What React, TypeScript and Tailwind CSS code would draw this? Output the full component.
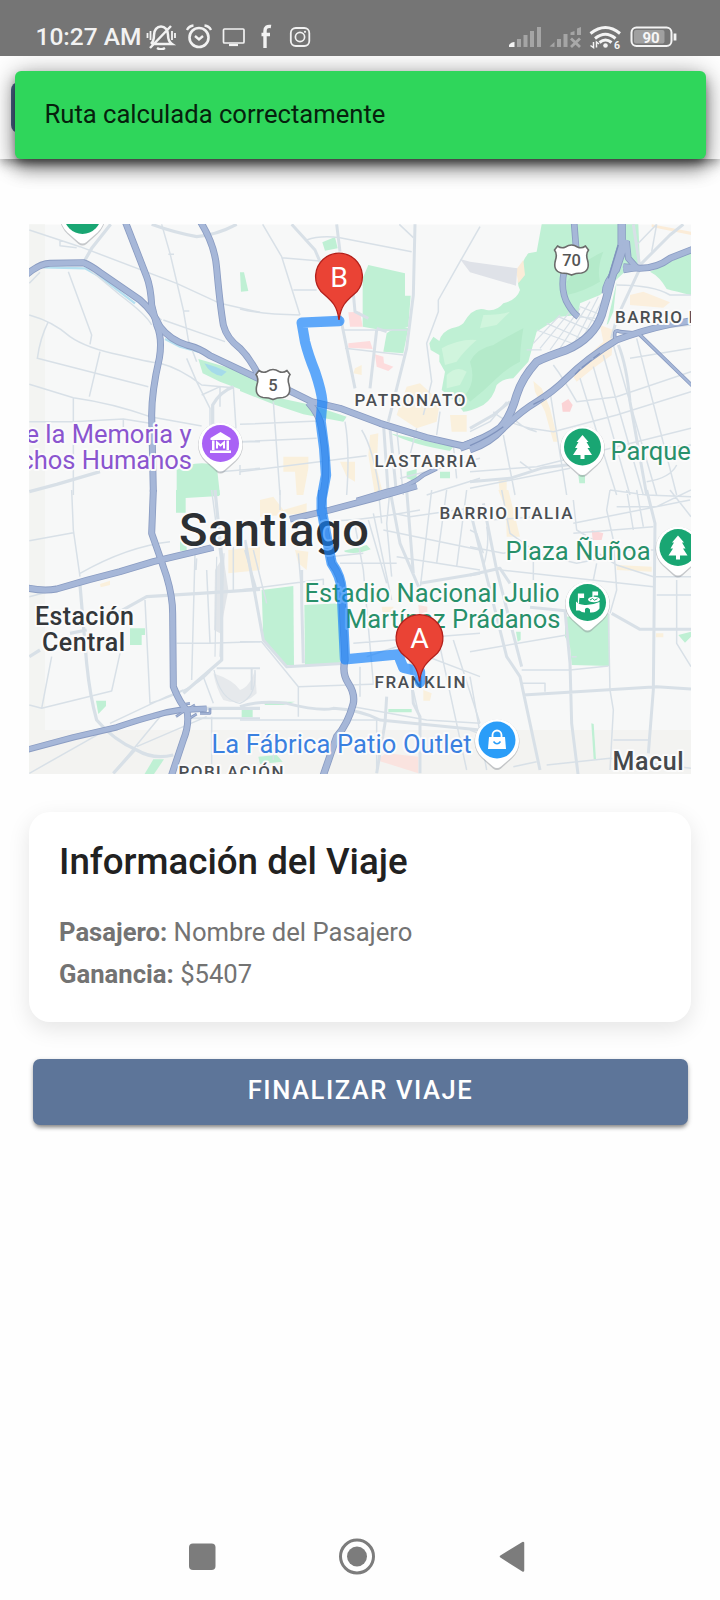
import type { ReactNode } from "react";

type Tile = { x: number; y: number };
const NW: Tile = { x: 20, y: 215 };
const N: Tile = { x: 240, y: 215 };
const NE: Tile = { x: 470, y: 215 };
const SW: Tile = { x: 20, y: 490 };
const S: Tile = { x: 240, y: 490 };
const SE: Tile = { x: 470, y: 490 };

function Sector({ at, children }: { at: Tile; children: ReactNode }) {
  return <g transform={`translate(${at.x} ${at.y}) scale(0.33333)`}>{children}</g>;
}

const areas: { at: Tile; d: string; fill: string }[] = [
  { at: NW, d: "M28 28H75V840H28Z", fill: "#f3f4f2" },
  { at: SW, d: "M28 0H75V860H28Z", fill: "#f3f4f2" },
  { at: SW, d: "M28 720H2100V860H28Z", fill: "#f3f3f1" },
  // parks
  { at: NW, d: "M660 172L672 172L685 228L663 230Z", fill: "#bff0d4" },
  { at: NW, d: "M535 432L640 462L720 500V545L600 500L548 475Z", fill: "#bff0d4" },
  { at: N, d: "M0 488L100 545L215 570L320 605L310 620L190 598L100 568L0 528Z", fill: "#bff0d4" },
  { at: NW, d: "M470 765Q520 735 590 750L600 840H470Z", fill: "#bff0d4" },
  { at: SW, d: "M468 0H598V18L497 24V68H468Z", fill: "#bff0d4" },
  { at: SW, d: "M480 150H500V182H480Z", fill: "#bff0d4" },
  { at: N, d: "M247 82L285 66L293 100L255 107Z", fill: "#bff0d4" },
  { at: N, d: "M385 150L495 175V242H512L505 335L440 348L368 335V190Z", fill: "#bff0d4" },
  { at: N, d: "M440 355Q480 325 505 340L490 415L430 410Z", fill: "#bff0d4" },
  {
    at: NE,
    d: "M215 28H505L510 150L470 165L390 240L330 265L325 300L270 305L200 350L175 440L130 490Q100 490 80 510Q70 550 40 570Q0 590 -20 590Q-40 560 -85 525L-75 470L-92 440V420L-118 405L-122 385L-110 365L-92 378Q-85 350 -55 340Q-30 335 -20 325Q10 270 50 285Q80 290 100 265Q140 255 150 225Q135 195 155 175Q150 145 175 115L200 110Z",
    fill: "#bff0d4",
  },
  { at: NE, d: "M540 170L663 110V240Q620 230 590 222Q570 185 540 170Z", fill: "#bff0d4" },
  { at: NE, d: "M410 330L440 200L430 290L415 325Z", fill: "#bff0d4" },
  { at: NE, d: "M325 780H345V805H328Z", fill: "#bff0d4" },
  { at: N, d: "M450 655L640 695L630 708Q520 690 450 655Z", fill: "#bff0d4" },
  { at: N, d: "M500 770L530 762V800L500 790ZM600 770H630V790H600Z", fill: "#bff0d4" },
  { at: SW, d: "M330 415H375V435H365V465H330Z", fill: "#bff0d4" },
  { at: SW, d: "M228 632H258V648L235 672Z", fill: "#bff0d4" },
  { at: SW, d: "M400 808H432L400 855H372Z", fill: "#bff0d4" },
  { at: SW, d: "M665 658H698V682H665Z", fill: "#bff0d4" },
  { at: S, d: "M65 300L160 288L162 525L138 525L70 450Z", fill: "#bff0d4" },
  { at: S, d: "M193 345L300 340V522L195 525Z", fill: "#bff0d4" },
  { at: S, d: "M312 182L380 165L392 178Q350 195 315 186Z", fill: "#bff0d4" },
  { at: S, d: "M70 635H165L130 645H75ZM445 657H515V667H445ZM55 800L110 795L128 815L60 822Z", fill: "#bff0d4" },
  { at: SE, d: "M285 380L418 372V528L305 525L300 470L285 440Z", fill: "#bff0d4" },
  { at: SE, d: "M625 435L663 425V440L645 458ZM138 425H152V450L143 455Z", fill: "#bff0d4" },
  { at: SE, d: "M364 700L371 702L378 808H371Z", fill: "#bff0d4" },
  // hill relief
  { at: NE, d: "M0 440Q20 400 70 390Q120 360 160 340Q150 400 150 440Q110 460 80 490Q40 530 0 560L-15 540Q20 500 0 440ZM290 200Q330 140 400 110Q380 160 390 200Q340 230 290 240Z", fill: "#b4eaca" },
  { at: NE, d: "M-85 400Q-30 370 20 375Q-20 410 -40 440L-75 450ZM-70 480Q-40 450 -10 470L-30 510L-70 520ZM40 300Q90 300 120 290L80 330L30 340Z", fill: "#d0f5dd" },
  // shopping corridors
  { at: N, d: "M500 515L540 505L600 560L590 620L530 640L470 600L480 570Z", fill: "#faf0dc" },
  { at: N, d: "M345 460L365 450V480L340 475ZM390 660L415 655L410 760L430 840H405L385 720ZM130 725H205V760L190 840H170L165 770H130ZM300 740H345V800L320 785Z", fill: "#faf0dc" },
  { at: N, d: "M630 600H680V650H635Z", fill: "#faf0dc" },
  { at: NE, d: "M480 240L520 230L600 262L580 278L480 270ZM390 330L430 345L425 420L370 460L320 500L300 470L400 380Z", fill: "#fbefdd" },
  { at: NE, d: "M190 498L215 520L240 580L265 680H250L225 590L195 530ZM85 790H110V840H90Z", fill: "#faf0dc" },
  { at: NE, d: "M138 165L160 135L165 180L145 205ZM545 28L663 50V60L545 36Z", fill: "#fbecd8" },
  { at: SW, d: "M240 282L270 272V285L242 292ZM625 180L720 170V240L625 250Z", fill: "#faf0dc" },
  { at: S, d: "M60 30L100 20L130 60L200 40V70L60 80ZM0 180L60 200L50 235L0 225ZM165 180L205 185L200 240L175 220Z", fill: "#faf0dc" },
  { at: S, d: "M425 350H460V385H430ZM550 600L575 610L570 632H550Z", fill: "#faf0dc" },
  { at: SE, d: "M85 0H115L130 60L150 140H110L108 60ZM440 225L545 230V245L440 240ZM558 430H580V442H558Z", fill: "#faf0dc" },
  // hospitals
  { at: N, d: "M325 292L360 290L368 335H330ZM325 385L390 378L398 402L325 398ZM405 418L430 425L432 445L460 455L445 468L410 455Z", fill: "#fddcdd" },
  { at: NE, d: "M275 565L295 552L308 570L300 590H278Z", fill: "#fbd3d5" },
  { at: S, d: "M535 345L562 350V400H540ZM415 805L440 790L535 800V850L415 812Z", fill: "#fae3df" },
  { at: SE, d: "M365 120L400 130L395 150H368Z", fill: "#fbd8da" },
  // airfield and depot
  { at: NE, d: "M-30 132L0 140L142 160L138 212L0 172Z", fill: "#dfe2e8" },
  { at: NW, d: "M553 445Q590 455 620 470L605 483Q570 478 553 445Z", fill: "#a5dbea" },
  { at: SW, d: "M585 240L610 200L625 300L600 430L582 420Z", fill: "#e1e5e9" },
  { at: SW, d: "M580 550Q640 570 660 600Q690 590 705 540L710 610Q670 650 610 630Q590 600 580 550Z", fill: "#e6e9ec" },
];

const streets: { at: Tile; d: string; w: number }[] = [
  { at: NW, w: 6, d: "M28 45L180 95L470 205L600 265L720 292M120 75V92L170 98M425 28L450 115L490 285L505 375L530 440M445 118H462M490 288H508M430 315L615 380M28 300Q100 320 150 365Q200 400 300 420Q380 440 420 445Q480 460 545 510L640 518M145 170L215 360L210 388M85 320Q60 370 52 430L385 515M240 410L208 545M28 508L160 548Q280 565 390 605L545 633M28 620H160L310 612L390 625M160 550V840M310 612V640M28 205L60 172M500 430L530 500L570 580V640M640 515L648 640M545 540L600 515V575M650 680H720M600 770L720 760M660 750V780" },
  { at: NW, w: 13, d: "M272 28L215 100L195 135M28 830L110 808L240 770M640 515Q600 530 578 570V640" },
  { at: NW, w: 13, d: "M395 28Q460 52 530 65Q590 60 650 28" },
  { at: NW, w: 6, d: "M205 160L300 240Q380 300 395 330M405 300L425 315" },
  { at: N, w: 6, d: "M68 28L125 125L180 300M200 75Q240 60 300 68L515 110M125 128L240 138M160 225H230M0 282Q60 298 180 300M478 28L520 68M720 35L660 140L595 255V290L560 385L575 500L550 600M315 400L490 420M0 628L235 618M0 680L230 670M0 770L380 722M100 560L120 840M315 620Q330 700 320 840M365 645Q400 700 420 840M470 640L490 840M530 640L500 760M600 590L590 660M640 690L650 790M310 345H500M480 790L720 730M560 840L720 790" },
  { at: N, w: 12, d: "M155 28L225 105L240 140M290 28L300 110M525 28L520 240L500 400L470 520L445 620M335 180L345 290L385 310M300 300L345 520M410 345L390 520M440 350L410 340M430 620L445 840M450 640L470 840" },
  { at: NE, w: 6, d: "M500 90L560 28M560 28L545 110M440 210Q550 210 600 240H663M250 450Q280 490 320 560L440 545L663 470M180 640L250 650L440 600L663 530M110 590Q150 640 200 650M240 530L290 840M330 490L440 840M370 455L480 840M400 420L520 840M430 390L560 840M500 370L620 840M530 345L663 330M480 430L663 400M100 660L135 840M70 590Q100 620 180 640M0 650L60 620L110 560M0 770L200 755M200 755L663 640M0 820L300 760M150 740L190 770M560 700L663 690M530 800Q600 790 620 750" },
  { at: NE, w: 12, d: "M445 390Q470 450 480 560L530 840M490 28L510 160L440 310L425 370M500 160L600 60L640 28M0 800L120 790L220 758L370 740M0 640L70 600L120 560" },
  { at: NE, w: 5, d: "M200 345L320 390M230 325L345 375M265 305L370 350M300 290L390 325M330 275L395 300M190 385L270 300M210 400L300 290M240 405L330 280M270 400L360 260M310 390L385 245M340 365L400 250M170 405H215M320 305L380 310" },
  { at: SW, w: 6, d: "M28 152L160 128M155 0L160 120L180 260M180 250Q320 170 450 155M95 500L65 655L28 645M65 655L275 603L300 490M375 330L390 640Q520 600 570 545M470 460H570L720 455M525 190L515 570M28 320L180 280M560 240L570 460M575 0L605 230M640 170V300M700 180L740 340M580 640L550 560M575 680V840M28 850L240 730M350 770L560 680M530 205L528 240M490 600L440 620L270 700M280 850L420 680" },
  { at: SW, w: 13, d: "M180 285Q190 400 200 520Q210 620 230 690Q280 750 350 780Q400 810 460 795M290 370L380 320L540 310L620 305L720 298M585 0L605 200V510L490 610M28 500L60 480M150 430L200 420M560 655H720M345 778L280 850" },
  { at: SW, w: 8, d: "M590 535H720M695 535V600M500 685H720M675 180L710 300" },
  { at: SW, w: 5, d: "M582 540Q600 630 660 640Q710 620 705 540M590 200L585 500M612 190L600 500" },
  { at: S, w: 6, d: "M0 300L250 268V285M0 455H65L175 590L480 580M175 590V680M120 0V60M175 190L185 310M245 90Q320 100 540 60M300 220H470M270 200L370 190M345 105L370 240L400 580M385 90L440 280M400 70L455 330M415 0L425 100M450 0L440 100L455 260M460 70L510 80L720 50M430 120L720 180M470 200L720 240M575 0L540 300M620 0L590 220M680 0L650 230M340 460L720 430M0 690H420M410 690V840M380 500L470 470M100 760V810M600 470L680 840M640 450L720 700M510 480L720 560M360 530V620M340 650L560 690L720 700M515 580L540 690" },
  { at: S, w: 12, d: "M15 150L70 450L140 530L320 520M185 240V330L190 520M0 650Q60 630 140 640Q240 665 280 655Q360 660 420 690L720 720M450 0L480 160L540 300M500 0L520 250M540 280L720 250M440 620L435 700L410 850M510 480L520 640L540 680V850" },
  { at: SE, w: 6, d: "M420 0L410 60L430 150L440 300L420 370M310 100L660 30M310 130L550 110M470 0L490 120M500 0L520 110M310 30L320 120L370 150M440 50H560L663 0M600 0L663 80M440 180H560L590 150M0 170L100 190M40 190L20 130L0 120M60 90L200 80M95 0L120 130L190 180V270M50 110Q60 160 40 230M90 240L550 290M370 180L440 225L550 260H663M380 220L370 270M560 315H663M620 270V460L663 530M420 0L530 15L663 20M0 485L290 435M155 540H300L415 528M150 580H225V605M415 370L420 600L430 660L420 840M0 560L50 840M430 750H540M0 720L50 740M230 825L420 805L663 835M130 830L200 815M320 500H305M100 190L150 180L320 220L420 200" },
  { at: SE, w: 12, d: "M0 60L30 180L110 500L150 560L210 840M0 255L90 235L120 280M180 352L285 362L300 520L305 700L325 860M425 370L510 418H663M530 0L555 100L550 600L535 790M160 615L320 605L560 590L663 597M40 40L80 240L155 530" },
];

const waterways: { at: Tile; d: string }[] = [
  { at: NW, d: "M70 157L195 160L240 185L345 265M435 372L480 395L535 410" },
];

const highways: { at: Tile; d: string; w: number }[] = [
  { at: NW, w: 21, d: "M18 180Q60 145 90 145L190 143Q210 150 240 172L360 255Q400 290 420 335Q450 375 500 390Q540 400 570 422L640 455L720 493" },
  { at: NW, w: 21, d: "M315 18L380 185Q392 215 395 270L410 330Q428 370 418 430Q395 530 395 600L400 830" },
  { at: NW, w: 21, d: "M540 18Q585 90 590 160Q600 270 610 330Q620 370 660 400Q690 430 715 480" },
  { at: N, w: 21, d: "M40 480L150 528L215 560L300 580L420 625L560 668L670 693L720 672" },
  { at: N, w: 22, d: "M205 562Q240 600 245 640Q262 740 255 800L245 870" },
  { at: N, w: 14, d: "M350 855L440 828Q510 815 550 780L590 760" },
  { at: NE, w: 25, d: "M-30 698Q50 670 90 640Q120 610 140 540Q155 490 200 440Q230 425 290 405Q370 370 395 300Q410 250 425 190L455 90V18" },
  { at: NE, w: 20, d: "M312 18L318 95L282 170Q270 230 295 270Q310 295 325 305" },
  { at: NE, w: 21, d: "M0 705Q60 685 100 640Q150 590 200 560Q250 530 290 490Q350 430 440 375Q520 345 600 328L680 315" },
  { at: NE, w: 21, d: "M460 155L510 160Q560 160 600 130L680 98" },
  { at: NE, w: 20, d: "M405 235Q405 200 440 165L470 75M470 80L475 130L500 158L460 165" },
  { at: NE, w: 11, d: "M435 370Q430 340 450 350L505 355L680 525" },
  { at: SW, w: 21, d: "M18 293Q70 305 110 297Q200 270 300 245L400 215L580 172" },
  { at: SW, w: 21, d: "M400 0L395 130Q420 200 440 260Q458 320 458 370L460 590Q480 640 500 660Q510 700 490 750L450 870" },
  { at: SW, w: 19, d: "M18 780L160 742L290 712Q360 688 400 678Q440 665 480 660L560 656" },
  { at: SW, w: 8, d: "M468 680L490 665L525 645M500 690L530 672M540 670H570V655M480 645L510 640" },
  { at: S, w: 20, d: "M150 88L270 60L420 20L530 -12" },
  { at: S, w: 22, d: "M245 0V60Q265 170 275 220Q305 260 305 300L315 510Q305 550 325 580Q345 610 340 640Q325 700 290 740L245 870" },
];

type LabelProps = { x: number; y: number; w?: number; size: number; color: string; weight?: number; end?: boolean; children: string };
function Label({ x, y, w, size, color, weight = 400, end, children }: LabelProps) {
  return (
    <text
      x={x + 0.5}
      y={y + 0.3}
      fontSize={size}
      fontWeight={weight}
      fill={color}
      textLength={w}
      textAnchor={end ? "end" : "start"}
      stroke="#fbfbfb"
      strokeWidth={4}
      strokeLinejoin="round"
      paintOrder="stroke"
    >
      {children}
    </text>
  );
}

function Poi({ x, y, color, children }: { x: number; y: number; color: string; children: ReactNode }) {
  return (
    <g transform={`translate(${x} ${y})`}>
      <path d="M-15 17A22.5 22.5 0 1 1 15 17L4 27Q0 30 -4 27Z" fill="#8a8f94" opacity=".45" transform="translate(0 1.5)" />
      <path d="M-15 17A22 22 0 1 1 15 17L4 26.500Q0 29.500 -4 26.500Z" fill="#fff" />
      <circle r="18.500" fill={color} />
      {children}
    </g>
  );
}

const tree = <path d="M0-12L6-5H4L7.500 1H5L9.500 8H2V12H-2V8H-9.500L-5 1H-7.500L-4-5H-6Z" fill="#fff" />;

function Marker({ x, y, letter }: { x: number; y: number; letter: string }) {
  return (
    <g transform={`translate(${x} ${y})`}>
      <path
        d="M0 0C-2-17-10-21-18-28.500A23.400 23.400 0 1 1 18-28.500C10-21 2-17 0 0Z"
        fill="#ea4335"
        stroke="#b31f1a"
        strokeWidth="1.300"
      />
      <text y="-33.500" fontSize="28.500" fill="#fff" textAnchor="middle">
        {letter}
      </text>
    </g>
  );
}

function Shield({ x, y, children }: { x: number; y: number; children: string }) {
  return (
    <g transform={`translate(${x} ${y})`}>
      <path
        d="M-14-14Q-10-11-6-13Q-3-15 0-15Q3-15 6-13Q10-11 14-14L17-10Q14-6 16 0Q19 11 10 13Q4 13 0 15Q-4 13-10 13Q-19 11-16 0Q-14-6-17-10Z"
        fill="#fff"
        stroke="#6b6b6b"
        strokeWidth="1.600"
      />
      <text y="6" fontSize="16.500" fontWeight="500" fill="#555" textAnchor="middle">
        {children}
      </text>
    </g>
  );
}

function RouteMap() {
  const dark = "#4a4e52";
  const green = "#28906a";
  return (
    <svg viewBox="29 224 662 550" className="block h-[550px] w-full font-['Roboto',sans-serif]">
      <rect x="29" y="224.500" width="662" height="549.500" fill="#f7f8f8" />
      {areas.map((a, i) => (
        <Sector key={i} at={a.at}>
          <path d={a.d} fill={a.fill} />
        </Sector>
      ))}
      {waterways.map((a, i) => (
        <Sector key={i} at={a.at}>
          <path d={a.d} fill="none" stroke="#b5e0f0" strokeWidth="7" />
        </Sector>
      ))}
      {streets.map((a, i) => (
        <Sector key={i} at={a.at}>
          <path d={a.d} fill="none" stroke="#d8e0e7" strokeWidth={a.w * 0.75} strokeLinejoin="round" />
        </Sector>
      ))}
      {highways.map((a, i) => (
        <Sector key={i} at={a.at}>
          <path d={a.d} fill="none" stroke="#8a9cc2" strokeWidth={a.w} strokeLinejoin="round" />
        </Sector>
      ))}
      {highways.map((a, i) => (
        <Sector key={i} at={a.at}>
          <path d={a.d} fill="none" stroke="#a6b7d8" strokeWidth={a.w - 5} strokeLinejoin="round" />
        </Sector>
      ))}
      <Sector at={NE}>
        <path
          d="M0 692Q60 665 100 635M315 478L330 462M335 458L365 435M370 430L390 415M190 568L222 552M415 190L445 90"
          fill="none"
          stroke="#7f93bd"
          strokeWidth="4"
        />
      </Sector>
      <Shield x={273} y={384.5}>5</Shield>
      <Shield x={571.5} y={260}>70</Shield>

      <Poi x={82.5} y={215.5} color="#19a673">{null}</Poi>
      <Poi x={220.5} y={443.5} color="#a962f5">
        <path d="M0-11.500L10-5.500V-3.500H-10V-5.500ZM-8.500-3H-6V6.500H-8.500ZM6-3H8.500V6.500H6ZM-10.500 7H10.500V9.500H-10.500Z" fill="#fff" />
        <path d="M-3.500 5V-1L0 2L3.500-1V5" fill="none" stroke="#fff" strokeWidth="2" />
      </Poi>
      <Poi x={582.5} y={447} color="#19a673">{tree}</Poi>
      <Poi x={678} y={547.5} color="#19a673">{tree}</Poi>
      <Poi x={587.5} y={602.5} color="#19a673">
        <path d="M-11.500-1Q-9 2-3 2.500Q4 3 12-.5V6Q9 10 4 10H2.500V7Q0 4-2.500 6.500V10Q-6 10-8 8H-11.500Z" fill="#fff" />
        <ellipse cx="6.500" cy="-3" rx="6" ry="2.800" fill="#fff" />
        <path d="M-9 1V-8.500H-4V-5H-8M5.500-5V-10.500H10V-7.500H6" stroke="#fff" strokeWidth="1.200" fill="#fff" />
        <path d="M2.500-2.500L5-4L7-2.300L10-3.800" stroke="#19a673" fill="none" />
      </Poi>
      <Poi x={497} y={740} color="#2a9df8">
        <path d="M-8-3H8L9 9H-9Z" fill="#fff" />
        <path d="M-4.500-2V-5A4.500 4.500 0 0 1 4.500-5V-2" fill="none" stroke="#fff" strokeWidth="1.800" />
        <path d="M-3.500 1.500Q0 6 3.500 1.500" fill="none" stroke="#2a9df8" strokeWidth="1.600" />
      </Poi>

      <Label x={191} y={443} size={25.5} color="#8a55cf" end>e la Memoria y</Label>
      <Label x={191.5} y={468.5} size={25.5} color="#8a55cf" end>chos Humanos</Label>
      <Label x={354} y={406} w={111} size={17} color={dark} weight={500}>PATRONATO</Label>
      <Label x={374} y={467} w={102} size={17} color={dark} weight={500}>LASTARRIA</Label>
      <Label x={439} y={519} w={133} size={17} color={dark} weight={500}>BARRIO ITALIA</Label>
      <Label x={614.5} y={323} w={67} size={17} color={dark} weight={500}>BARRIO</Label>
      <Label x={688} y={323} size={17} color={dark} weight={500}>I</Label>
      <Label x={610} y={459.5} size={25.5} color={green}>Parque</Label>
      <Label x={505} y={560} w={145} size={25.5} color={green}>Plaza Ñuñoa</Label>
      <Label x={304} y={602} w={255} size={25.5} color={green}>Estadio Nacional Julio</Label>
      <Label x={344.5} y={628} w={215.5} size={25.5} color={green}>Martínez Prádanos</Label>
      <Label x={34.5} y={625} w={99} size={25} color="#34373a" weight={500}>Estación</Label>
      <Label x={41.5} y={651} w={83} size={25} color="#34373a" weight={500}>Central</Label>
      <Label x={374} y={688} w={91} size={17} color={dark} weight={500}>FRANKLIN</Label>
      <Label x={211} y={752.5} w={260} size={25.5} color="#3a80e0">La Fábrica Patio Outlet</Label>
      <Label x={178} y={778} w={105} size={17} color={dark} weight={500}>POBLACIÓN</Label>
      <Label x={612} y={769.5} w={71} size={25} color="#45484b" weight={500}>Macul</Label>
      <Label x={178.5} y={545.5} w={190} size={47} color="#2c2f33" weight={500}>Santiago</Label>

      <Sector at={N}>
        <path
          d="M298 318L185 323L195 380Q205 420 225 470Q245 530 247 560L242 620Q255 700 258 780L245 850V885Q265 995 275 1045Q303 1085 305 1125L315 1333L475 1318Q480 1335 490 1358L540 1370V1402"
          fill="none"
          stroke="#1482fa"
          strokeOpacity=".68"
          strokeWidth="31"
          strokeLinecap="round"
          strokeLinejoin="round"
        />
      </Sector>
      <Marker x={339} y={320} letter="B" />
      <Marker x={419.5} y={681.5} letter="A" />
    </svg>
  );
}

function LeftStatusIcons() {
  return (
    <svg width="170" height="28" viewBox="144 22 170 28" fill="none" stroke="#f2f2f2" strokeWidth="2">
      <g strokeWidth="2.500">
        <path d="M153 44H172C169 42 168 40 168 35C168 30 165 26.500 161 26.500C157 26.500 154 30 154 35C154 40 153 42 151 44M150 48L171 26" />
        <path d="M157 48Q161 50.500 165 48" />
        <path d="M147.500 33V38M150.500 31V40M172 31V40M175 33V38" strokeWidth="1.800" />
      </g>
      <circle cx="199" cy="37.500" r="9.500" strokeWidth="2.600" />
      <path d="M187 30Q189 26 193.500 25.500M211 30Q209 26 204.500 25.500M195 36L199 39.500L203 36" strokeWidth="2.400" />
      <rect x="223.500" y="29" width="20.500" height="14" rx="1" strokeWidth="1.700" />
      <path d="M229 45H238" strokeWidth="2.200" />
      <path d="M271 26.500Q265 25.500 265 31V48M261.500 34.500H270" strokeWidth="3.400" />
      <rect x="290.800" y="28" width="18.500" height="18" rx="5" strokeWidth="1.800" />
      <circle cx="300" cy="37" r="4.600" strokeWidth="1.700" />
      <circle cx="305" cy="31.800" r="1.100" fill="#f2f2f2" stroke="none" />
    </svg>
  );
}

function RightStatusIcons() {
  return (
    <svg width="170" height="28" viewBox="508 22 170 28" fill="none" stroke="#f4f4f4">
      <path d="M519 47V39M525.500 47V35M532 47V31M539 47V27" stroke="#a5a5a5" strokeWidth="4" />
      <path d="M509 47V45Q511 42 514.500 42V47Z" fill="#f4f4f4" stroke="none" />
      <path d="M549.500 46.500L554.500 42V47ZM557 47V39H561V47ZM563.500 47V34H567.500V47ZM570.500 35V32.500L574.500 31V35ZM577 28.500L581 27V35H577Z" fill="#a5a5a5" stroke="none" />
      <path d="M571 38.500L580 47M580 38.500L571 47" stroke="#a9a9a9" strokeWidth="2.800" />
      <g strokeWidth="3">
        <path d="M590.500 33.500Q605.500 21.500 620 33.500M595 38.500Q605.500 30 615.500 38.500M599.500 42.500Q605.500 37.500 611.500 42.500" />
        <circle cx="605.500" cy="45.500" r="2.300" fill="#f4f4f4" stroke="none" />
        <path d="M593.500 42V47.500L590.500 45.500M596.500 47.500V42L599 44" strokeWidth="1.500" />
      </g>
      <text x="614" y="48.500" fontSize="10.500" fontWeight="700" fill="#f4f4f4" stroke="none">6</text>
      <rect x="631.500" y="27.500" width="40" height="18.500" rx="5" strokeWidth="2" />
      <rect x="634" y="30" width="30.500" height="13.500" rx="2" fill="#a0a0a0" stroke="none" />
      <path d="M675 33.500V40.500" strokeWidth="2.800" />
      <text x="651" y="42.800" fontSize="15" fontWeight="700" fill="#f7f7f7" stroke="none" textAnchor="middle">90</text>
    </svg>
  );
}

export default function App() {
  return (
    <div className="relative flex h-[1600px] w-[720px] flex-col overflow-hidden bg-[#fefefe] font-['Roboto',sans-serif]">
      <div className="relative z-20 flex h-14 shrink-0 items-start bg-[#757575] pt-[22px] pl-[35.500px]">
        <span className="w-[108.500px] text-[24.500px] leading-[30px] font-medium whitespace-nowrap text-[#f2f2f2]">10:27 AM</span>
        <LeftStatusIcons />
        <div className="ml-[194px]">
          <RightStatusIcons />
        </div>
      </div>

      <header className="relative h-[103px] shrink-0 bg-white pt-[26px] pl-[11px] shadow-[0_4px_7px_-2px_rgba(0,0,0,0.2),0_7px_9px_rgba(0,0,0,0.14),0_2px_18px_rgba(0,0,0,0.12)]">
        <div className="h-[51px] w-[90px] rounded-lg bg-[#4f6a90]" />
      </header>

      <div className="absolute top-[70.500px] left-[15px] z-10 flex h-[88.500px] w-[691px] items-center rounded-[6px] bg-[#2fd65b] px-[29.500px] pb-[2px] shadow-[0_5px_9px_-2px_rgba(0,0,0,0.4),0_11px_18px_rgba(0,0,0,0.32),0_2px_26px_rgba(0,0,0,0.34)]">
        <span className="text-[25.600px] text-[#06210d]">Ruta calculada correctamente</span>
      </div>

      <main className="flex flex-1 flex-col px-[29px] pt-[65px]">
        <RouteMap />
        <section className="mt-[37.500px] h-[210px] rounded-[21px] bg-white px-[30px] pt-[28px] shadow-[0_7px_22px_rgba(0,0,0,0.1)]">
          <h2 className="text-[36.700px] leading-[44px] font-medium text-[#212121]">Información del Viaje</h2>
          <div className="mt-[27px] text-[25.650px] leading-[42px] text-[#737373]">
            <p>
              <b className="font-bold">Pasajero:</b> Nombre del Pasajero
            </p>
            <p>
              <b className="font-bold">Ganancia:</b> $5407
            </p>
          </div>
        </section>
        <button className="mr-[3px] ml-[4px] mt-[37px] h-[66px] rounded-[7px] bg-[#5d7599] pb-[3px] text-[25.600px] font-medium tracking-[1.540px] text-white shadow-[0_4px_4px_-2px_rgba(0,0,0,0.35),0_2px_5px_rgba(0,0,0,0.25)]">
          FINALIZAR VIAJE
        </button>
      </main>

      <nav className="flex h-[62px] shrink-0 items-start pl-[189px]">
        <svg width="27" height="38" viewBox="0 0 27 38">
          <rect x="0" y="5.500" width="26.500" height="26.500" rx="4" fill="#7c7c7c" />
        </svg>
        <svg width="38" height="38" viewBox="0 0 38 38" className="ml-[122px]">
          <circle cx="19" cy="18.500" r="16.500" fill="none" stroke="#7c7c7c" strokeWidth="3" />
          <circle cx="19" cy="18.500" r="10" fill="#7c7c7c" />
        </svg>
        <svg width="27" height="38" viewBox="0 0 27 38" className="ml-[123px]">
          <path d="M2 18.500L24 5V32.500Z" fill="#7c7c7c" stroke="#7c7c7c" strokeWidth="2.500" strokeLinejoin="round" />
        </svg>
      </nav>
    </div>
  );
}
